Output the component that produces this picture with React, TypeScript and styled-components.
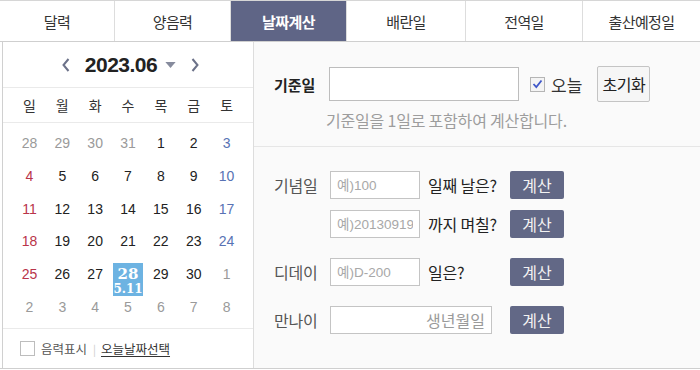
import styled, { createGlobalStyle } from "styled-components";

const GlobalStyle = createGlobalStyle`
  body {
    margin: 0;
    background: #ffffff;
    font-family: "Noto Sans CJK KR", "Noto Sans", sans-serif;
    color: #222;
  }
  * { box-sizing: border-box; }
`;

const tabs = ["달력", "양음력", "날짜계산", "배란일", "전역일", "출산예정일"];
const weekdays = ["일", "월", "화", "수", "목", "금", "토"];

type Day = { n: number; other?: boolean; today?: boolean };

const weeks: Day[][] = [
  [{ n: 28, other: true }, { n: 29, other: true }, { n: 30, other: true }, { n: 31, other: true }, { n: 1 }, { n: 2 }, { n: 3 }],
  [{ n: 4 }, { n: 5 }, { n: 6 }, { n: 7 }, { n: 8 }, { n: 9 }, { n: 10 }],
  [{ n: 11 }, { n: 12 }, { n: 13 }, { n: 14 }, { n: 15 }, { n: 16 }, { n: 17 }],
  [{ n: 18 }, { n: 19 }, { n: 20 }, { n: 21 }, { n: 22 }, { n: 23 }, { n: 24 }],
  [{ n: 25 }, { n: 26 }, { n: 27 }, { n: 28, today: true }, { n: 29 }, { n: 30 }, { n: 1, other: true }],
  [{ n: 2, other: true }, { n: 3, other: true }, { n: 4, other: true }, { n: 5, other: true }, { n: 6, other: true }, { n: 7, other: true }, { n: 8, other: true }],
];

const dayColor = (d: Day, col: number) => {
  if (d.other) return "#9a9a9a";
  if (col === 0) return "#b9344a";
  if (col === 6) return "#5872b4";
  return "#222222";
};

const App = () => {
  return (
    <>
      <GlobalStyle />
      <Frame>
        <TabBar>
          {tabs.map((t, i) => (
            <Tab key={t} active={i === 2}>
              {t}
            </Tab>
          ))}
        </TabBar>
        <Body>
          <CalendarPanel>
            <MonthHeader>
              <Arrow viewBox="0 0 10 16">
                <path d="M7.5 2 L2.5 8 L7.5 14" />
              </Arrow>
              <MonthTitle>
                2023.06
                <Caret viewBox="0 0 12 7">
                  <path d="M0 0 H12 L6 7 Z" />
                </Caret>
              </MonthTitle>
              <Arrow viewBox="0 0 10 16">
                <path d="M2.5 2 L7.5 8 L2.5 14" />
              </Arrow>
            </MonthHeader>
            <WeekdayRow>
              {weekdays.map((w) => (
                <Weekday key={w}>{w}</Weekday>
              ))}
            </WeekdayRow>
            <DayGrid>
              {weeks.map((week, wi) =>
                week.map((d, ci) => (
                  <DayCell key={`${wi}-${ci}`} today={!!d.today}>
                    <DayNum color={d.today ? "#ffffff" : dayColor(d, ci)} bold={!!d.today}>
                      {d.n}
                    </DayNum>
                    {d.today && <Lunar>5.11</Lunar>}
                  </DayCell>
                ))
              )}
            </DayGrid>
            <CalFooter>
              <Box />
              <FooterText>음력표시</FooterText>
              <Sep>|</Sep>
              <TodayLink>오늘날짜선택</TodayLink>
            </CalFooter>
          </CalendarPanel>
          <CalcPanel>
            <BaseSection>
              <BaseRow>
                <BaseLabel>기준일</BaseLabel>
                <BaseInput />
                <CheckWrap>
                  <CheckBox>
                    <svg width="11" height="10" viewBox="0 0 11 10">
                      <path d="M1.5 5 L4.3 8 L9.5 1.5" fill="none" stroke="#3f57c9" strokeWidth="1.8" />
                    </svg>
                  </CheckBox>
                  오늘
                </CheckWrap>
                <ResetButton>초기화</ResetButton>
              </BaseRow>
              <Help>기준일을 1일로 포함하여 계산합니다.</Help>
            </BaseSection>
            <CalcList>
              <CalcRow top={0}>
                <RowLabel>기념일</RowLabel>
                <SmallInput placeholder="예)100" />
                <After>일째 날은?</After>
                <CalcButton>계산</CalcButton>
              </CalcRow>
              <CalcRow top={11}>
                <RowLabel />
                <SmallInput placeholder="예)20130919" />
                <After>까지 며칠?</After>
                <CalcButton>계산</CalcButton>
              </CalcRow>
              <CalcRow top={20}>
                <RowLabel>디데이</RowLabel>
                <SmallInput placeholder="예)D-200" />
                <After>일은?</After>
                <CalcButton>계산</CalcButton>
              </CalcRow>
              <CalcRow top={20}>
                <RowLabel>만나이</RowLabel>
                <WideInput placeholder="생년월일" />
                <CalcButton>계산</CalcButton>
              </CalcRow>
            </CalcList>
          </CalcPanel>
        </Body>
      </Frame>
    </>
  );
};

export default App;

const Frame = styled.div`
  width: 700px;
  height: 369px;
  border-bottom: 1px solid #cfcfcf;
  display: flex;
  flex-direction: column;
`;

const TabBar = styled.div`
  display: grid;
  grid-template-columns: 114px 116px 116px 119px 117px 1fr;
  height: 42px;
  border-top: 1px solid #d6d6d6;
  border-bottom: 1px solid #cfcfcf;
`;

const Tab = styled.div<{ active: boolean }>`
  display: flex;
  align-items: center;
  justify-content: center;
  font-size: 15px;
  font-weight: ${(p) => (p.active ? 700 : 400)};
  color: ${(p) => (p.active ? "#ffffff" : "#333333")};
  background: ${(p) => (p.active ? "#5f6586" : "#ffffff")};
  border-left: 1px solid #dddddd;
  letter-spacing: -0.6px;
  &:first-child {
    border-left: none;
  }
`;

const Body = styled.div`
  flex: 1;
  display: flex;
  margin-left: 2px;
  border-left: 1px solid #d0d0d0;
`;

const CalendarPanel = styled.div`
  width: 251px;
  display: flex;
  flex-direction: column;
  border-right: 1px solid #dddddd;
  background: #ffffff;
`;

const MonthHeader = styled.div`
  height: 46px;
  display: flex;
  align-items: center;
  justify-content: center;
  gap: 14px;
  border-bottom: 1px solid #eaeaea;
  padding-left: 5px;
`;

const Arrow = styled.svg`
  width: 10px;
  height: 16px;
  fill: none;
  stroke: #6c7289;
  stroke-width: 2;
`;

const MonthTitle = styled.div`
  display: flex;
  align-items: center;
  gap: 8px;
  font-family: "Liberation Sans", Arial, sans-serif;
  font-size: 21px;
  font-weight: 700;
  letter-spacing: -0.5px;
  color: #222;
`;

const Caret = styled.svg`
  width: 11px;
  height: 6px;
  fill: #868b9d;
`;

const WeekdayRow = styled.div`
  display: grid;
  grid-template-columns: repeat(7, 1fr);
  height: 35px;
  padding: 0 10px;
  align-items: center;
  border-bottom: 1px solid #eaeaea;
`;

const Weekday = styled.div`
  text-align: center;
  font-size: 14px;
  color: #333;
`;

const DayGrid = styled.div`
  display: grid;
  grid-template-columns: repeat(7, 1fr);
  grid-auto-rows: 32.8px;
  padding: 9px 10px 0;
  height: 206px;
  border-bottom: 1px solid #eaeaea;
`;

const DayCell = styled.div<{ today: boolean }>`
  display: flex;
  flex-direction: column;
  align-items: center;
  margin: 0 1.5px;
  background: ${(p) => (p.today ? "#6db3e2" : "transparent")};
`;

const DayNum = styled.span<{ color: string; bold: boolean }>`
  font-family: ${(p) => (p.bold ? '"DejaVu Serif", serif' : '"Liberation Sans", Arial, sans-serif')};
  font-size: ${(p) => (p.bold ? "15px" : "14px")};
  font-weight: ${(p) => (p.bold ? 700 : 400)};
  line-height: ${(p) => (p.bold ? "18px" : "22px")};
  padding-top: ${(p) => (p.bold ? "2px" : "0")};
  color: ${(p) => p.color};
`;

const Lunar = styled.span`
  font-family: "DejaVu Serif", serif;
  font-size: 12px;
  font-weight: 700;
  line-height: 13px;
  color: #ffffff;
`;

const CalFooter = styled.div`
  flex: 1;
  display: flex;
  align-items: center;
  padding-left: 17px;
  font-size: 12.5px;
`;

const Box = styled.span`
  width: 15px;
  height: 15px;
  border: 1px solid #bdbdbd;
  background: #fff;
  margin-right: 6px;
`;

const FooterText = styled.span`
  color: #555;
`;

const Sep = styled.span`
  color: #cccccc;
  margin: 0 5px 0 6px;
  font-size: 11px;
`;

const TodayLink = styled.span`
  color: #333;
  text-decoration: underline;
  text-underline-offset: 2px;
`;

const CalcPanel = styled.div`
  flex: 1;
  background: #fafafa;
  display: flex;
  flex-direction: column;
`;

const BaseSection = styled.div`
  height: 105px;
  border-bottom: 1px solid #e6e6e6;
  padding: 24px 0 0 20px;
`;

const BaseRow = styled.div`
  display: flex;
  align-items: center;
  height: 36px;
`;

const BaseLabel = styled.span`
  width: 55px;
  font-size: 15px;
  font-weight: 700;
  color: #222;
`;

const BaseInput = styled.input`
  width: 190px;
  height: 34px;
  border: 1px solid #bdbdbd;
  background: #fff;
  outline: none;
`;

const CheckWrap = styled.span`
  display: flex;
  align-items: center;
  gap: 6px;
  margin-left: 11px;
  font-size: 17px;
  color: #333;
`;

const CheckBox = styled.span`
  width: 15px;
  height: 15px;
  border: 1px solid #b5b5b5;
  background: #f4f4f4;
  display: flex;
  align-items: center;
  justify-content: center;
`;

const ResetButton = styled.button`
  margin-left: 15px;
  width: 53px;
  height: 36px;
  padding: 0;
  border: 1px solid #c4c4c4;
  border-radius: 2px;
  background: #f6f6f6;
  font-family: "Noto Sans CJK KR", sans-serif;
  font-size: 16px;
  letter-spacing: -0.5px;
  color: #222;
`;

const Help = styled.div`
  margin: 6px 0 0 52px;
  font-size: 16px;
  color: #9d9d9d;
  letter-spacing: -0.2px;
`;

const CalcList = styled.div`
  display: flex;
  flex-direction: column;
  padding: 24px 0 0 20px;
`;

const CalcRow = styled.div<{ top: number }>`
  display: flex;
  align-items: center;
  height: 28px;
  margin-top: ${(p) => p.top}px;
`;

const RowLabel = styled.span`
  width: 56px;
  font-size: 16px;
  color: #555;
  letter-spacing: -0.2px;
`;

const inputBase = `
  height: 28px;
  border: 1px solid #c4c4c4;
  background: #fff;
  outline: none;
  font-family: "Liberation Sans", "Noto Sans CJK KR", sans-serif;
  font-size: 13.5px;
  padding: 0 6px;
  &::placeholder { color: #a8a8a8; }
`;

const SmallInput = styled.input`
  ${inputBase}
  width: 90px;
`;

const WideInput = styled.input`
  ${inputBase}
  width: 162px;
  margin-right: 18px;
  text-align: right;
  font-family: "Noto Sans CJK KR", sans-serif;
  font-size: 16px;
  &::placeholder { color: #9a9a9a; }
`;

const After = styled.span`
  width: 90px;
  padding-left: 8px;
  font-size: 16px;
  letter-spacing: -0.2px;
  color: #222;
`;

const CalcButton = styled.button`
  width: 54px;
  height: 28px;
  padding: 0;
  border: none;
  border-radius: 2px;
  background: #626886;
  color: #f2f2f2;
  font-family: "Noto Sans CJK KR", sans-serif;
  font-size: 16px;
`;
